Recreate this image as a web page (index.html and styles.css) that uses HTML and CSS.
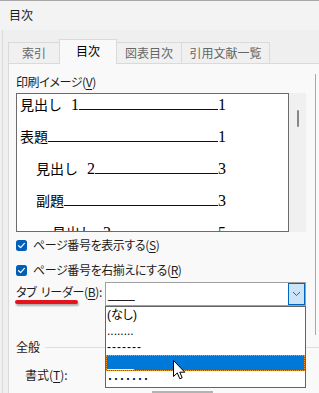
FILE: index.html
```html
<!DOCTYPE html>
<html lang="ja">
<head>
<meta charset="utf-8">
<link rel="stylesheet" href="styles.css">
</head>
<body>
<div class="window">
  <div class="titlebar">目次</div>
  <div class="body">
    <div class="tabs">
      <div class="tab t1">索引</div>
      <div class="tab t2 sel">目次</div>
      <div class="tab t3">図表目次</div>
      <div class="tab t4">引用文献一覧</div>
    </div>
    <div class="panel">
      <div class="label">印刷イメージ(<u>V</u>)</div>
      <div class="preview-row">
        <div class="preview">
          <div class="toc-row l0"><span>見出し<span class="num gap">1</span></span><span class="lead"></span><span class="num">1</span></div>
          <div class="toc-row l0"><span>表題</span><span class="lead"></span><span class="num">1</span></div>
          <div class="toc-row l1"><span>見出し<span class="num gap">2</span></span><span class="lead"></span><span class="num">3</span></div>
          <div class="toc-row l1"><span>副題</span><span class="lead"></span><span class="num">3</span></div>
          <div class="toc-row l2"><span>見出し<span class="num gap">3</span></span><span class="lead"></span><span class="num">5</span></div>
        </div>
        <div class="vscroll"><div class="thumb"></div></div>
      </div>
      <div class="check c1">
        <span class="cb"><svg width="11" height="11" viewBox="0 0 11 11"><path d="M2.6 5.7 L4.6 7.6 L8.4 3.4" fill="none" stroke="#fff" stroke-width="1.2" stroke-linecap="round" stroke-linejoin="round"/></svg></span>
        <span>ページ番号を表示する(<u>S</u>)</span>
      </div>
      <div class="check c2">
        <span class="cb"><svg width="11" height="11" viewBox="0 0 11 11"><path d="M2.6 5.7 L4.6 7.6 L8.4 3.4" fill="none" stroke="#fff" stroke-width="1.2" stroke-linecap="round" stroke-linejoin="round"/></svg></span>
        <span>ページ番号を右揃えにする(<u>R</u>)</span>
      </div>
      <div class="leader-row">
        <span class="lbl">タブ<span class="sp"> </span>リーダー(<u>B</u>):<span class="marker"></span></span>
        <div class="combo">
          <span class="value">____</span>
          <span class="btn"><svg width="9" height="6" viewBox="0 0 9 6"><path d="M1 1 L4.5 4.5 L8 1" fill="none" stroke="#5a5a5a" stroke-width="1"/></svg></span>
          <div class="list">
            <div class="item">(なし)</div>
            <div class="item">........</div>
            <div class="item dash">-------</div>
            <div class="item sel">____</div>
            <div class="item mid">･･･････</div>
          </div>
        </div>
      </div>
      <div class="group">全般<span class="sep"></span></div>
      <div class="format">書式(<u>T</u>):</div>
      <div class="bottom-edge"></div>
      <div class="web-edge"></div>
    </div>
  </div>
  <svg class="cursor" width="13" height="21" viewBox="0 0 13 21"><path d="M0.5 0.5 L0.5 16.5 L4.3 12.9 L6.8 18.8 L9.2 17.8 L6.8 12.2 L11.8 12.2 Z" fill="#fff" stroke="#000" stroke-width="1" stroke-linejoin="miter"/></svg>
</div>
</body>
</html>
```

FILE: styles.css
```css
* { box-sizing: border-box; }

body {
  margin: 0;
  background: #f0f0f0;
  font-family: "Noto Sans CJK JP", sans-serif;
  font-size: 12px;
  color: #1b1b1b;
  font-feature-settings: "palt";
}

u { text-underline-offset: 2px; text-decoration-thickness: 1px; }

.window {
  position: relative;
  width: 319px;
  height: 393px;
  overflow: hidden;
  border-top: 1px solid #a9a9a9;
  background: #efefef;
}

.titlebar {
  height: 29px;
  line-height: 28px;
  padding-left: 9px;
  background: #f3f3f3;
  color: #1b1b1b;
}

.body {
  height: 363px;
  margin-left: 2px;
  border-left: 1px solid #dadada;
  background: #efefef;
}

.tabs {
  display: flex;
  align-items: flex-end;
  height: 33px;
  padding-left: 5px;
}

.tab {
  height: 21px;
  border: 1px solid #dadada;
  border-bottom: none;
  margin-left: -1px;
  background: #f0f0f0;
  color: #666;
  display: flex;
  align-items: center;
  justify-content: center;
  line-height: 16px;
  padding-bottom: 1px;
}
.t1 { width: 52px; margin-left: 0; }
.t2 { width: 58px; }
.t3 { width: 66px; }
.t4 { width: 89px; }
.tab.sel {
  position: relative;
  z-index: 1;
  height: 25px;
  margin-bottom: -1px;
  background: #f9f9f9;
  color: #000;
  padding-bottom: 2px;
}

.panel {
  position: relative;
  height: 331px;
  margin-left: 5px;
  border-left: 1px solid #dadada;
  border-top: 1px solid #dadada;
  background: #f9f9f9;
  padding: 10px 0 0 7px;
}

.label {
  height: 16px;
  line-height: 16px;
  letter-spacing: -0.4px;
}

.preview-row {
  display: flex;
  height: 139px;
  margin-top: 3px;
}

.preview {
  width: 273px;
  border: 1px solid #6b6b6b;
  background: #fff;
  overflow: hidden;
  padding-right: 62px;
  font-size: 14px;
  color: #000;
  font-feature-settings: normal;
}

.toc-row {
  display: flex;
  align-items: baseline;
  height: 20px;
  line-height: 20px;
  margin-bottom: 12px;
  white-space: nowrap;
}
.l0 { padding-left: 3px; }
.l1 { padding-left: 19px; }
.l2 { padding-left: 35px; }

.num {
  font-family: "Liberation Serif", serif;
  font-size: 16px;
}
.num.gap { margin-left: 9px; }

.lead {
  flex: 1;
  height: 0;
  border-bottom: 1px solid #111;
}

.vscroll {
  width: 17px;
  background: #f0f0f0;
  display: flex;
  justify-content: center;
  padding-top: 17px;
}
.thumb {
  width: 2px;
  height: 17px;
  background: #868686;
  border-radius: 1px;
}

.check {
  display: flex;
  align-items: center;
  gap: 6px;
  height: 16px;
  line-height: 16px;
  letter-spacing: -0.4px;
}
.c1 { margin-top: 5px; }
.c2 { margin-top: 9px; }

.cb {
  width: 11px;
  height: 11px;
  border-radius: 2.5px;
  background: #005fb8;
  display: flex;
}

.leader-row {
  display: flex;
  height: 24px;
  margin-top: 4px;
}

.lbl {
  position: relative;
  width: 89px;
  height: 16px;
  line-height: 16px;
  margin-top: 2px;
  letter-spacing: -0.3px;
  white-space: nowrap;
}
.sp {
  font-family: "Liberation Sans", sans-serif;
  letter-spacing: 1px;
}

.marker {
  position: absolute;
  left: -1px;
  top: 16px;
  width: 63px;
  height: 4px;
  border-radius: 2px;
  background: #e5141c;
  box-shadow: 1px 2px 2px rgba(0, 0, 0, 0.3);
}

.combo {
  position: relative;
  width: 201px;
  height: 24px;
  border: 1px solid #a0a0a0;
  background: #fff;
  display: flex;
  align-items: center;
  justify-content: space-between;
}

.value {
  padding-left: 2px;
  line-height: 16px;
  font-family: "Liberation Sans", sans-serif;
  color: #000;
}

.btn {
  width: 17px;
  height: 22px;
  border: 1px solid #0067c0;
  background: #cce4f7;
  display: flex;
  align-items: center;
  justify-content: center;
}

.list {
  position: absolute;
  left: -1px;
  top: calc(100% + 1px);
  width: 201px;
  height: 82px;
  border: 1px solid #646464;
  background: #fff;
  z-index: 2;
}

.item {
  height: 16px;
  line-height: 16px;
  padding-left: 1px;
  font-family: "Liberation Sans", "Noto Sans CJK JP", sans-serif;
  color: #000;
  white-space: nowrap;
}
.item.dash { letter-spacing: 1px; }
.item.mid { font-family: "Noto Sans CJK JP", sans-serif; }
.item.sel {
  background: #0078d7;
  color: #fff;
  border: 1px dotted #f7931e;
  line-height: 14px;
  padding-left: 0;
}

.group {
  display: flex;
  align-items: center;
  gap: 5px;
  height: 16px;
  line-height: 16px;
  margin-top: 33px;
}
.sep {
  flex: 1;
  height: 1px;
  background: #dedede;
}

.format {
  margin-top: 12px;
  padding-left: 9px;
  height: 16px;
  line-height: 16px;
}

.bottom-edge {
  margin-top: 8px;
  margin-left: 136px;
  width: 61px;
  height: 2px;
  background: #b3b3b3;
}

.web-edge {
  position: absolute;
  left: 306px;
  top: 10px;
  width: 1px;
  height: 261px;
  background: #a8a8a8;
}

.cursor {
  position: absolute;
  left: 173px;
  top: 359px;
  z-index: 5;
}
```
